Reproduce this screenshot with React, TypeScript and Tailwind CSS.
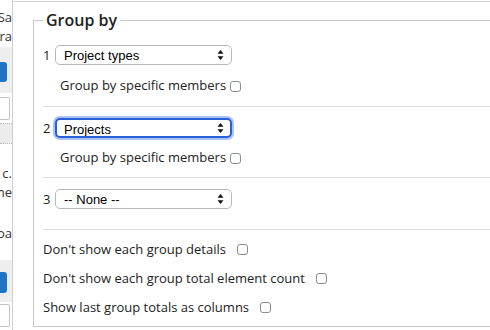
import React from "react";

function UpDown() {
  return (
    <svg width="7" height="11" viewBox="0 0 7 11" className="pointer-events-none absolute right-[8px] top-1/2 -translate-y-1/2">
      <path d="M3.5 0.5 L6.5 4.3 H0.5 Z" fill="#111" />
      <path d="M3.5 10.5 L6.5 6.7 H0.5 Z" fill="#111" />
    </svg>
  );
}

function Select({ value, focused }: { value: string; focused?: boolean }) {
  return (
    <div className="relative w-[177px] h-[20px]">
      <select
        defaultValue={value}
        className={
          focused
            ? "block appearance-none w-full h-full rounded-[5px] border-2 border-[#2a5fd8] shadow-[0_0_0_2px_#a9c3f5] bg-white pl-[7px] text-[13px] text-black outline-none font-['Liberation_Sans',Arial,sans-serif]"
            : "block appearance-none w-full h-full rounded-[5px] border border-[#b8b8b8] bg-white pl-[8px] text-[13px] text-black outline-none font-['Liberation_Sans',Arial,sans-serif]"
        }
      >
        <option>{value}</option>
      </select>
      <UpDown />
    </div>
  );
}

function Box() {
  return (
    <input
      type="checkbox"
      className="appearance-none w-[11px] h-[11px] rounded-[3px] border border-[#8c8c8c] bg-white shrink-0"
    />
  );
}

function GroupRow({ n, value, focused, members }: { n: number; value: string; focused?: boolean; members?: boolean }) {
  return (
    <>
      <div className="flex items-center h-[20px]">
        <span className="w-[12px] text-[13px] leading-[20px]">{n}</span>
        <Select value={value} focused={focused} />
      </div>
      {members && (
        <label className="flex items-center gap-[4px] h-[20px] ml-[17px] mt-[10px] text-[13px]">
          Group by specific members
          <Box />
        </label>
      )}
    </>
  );
}

const options = [
  "Don't show each group details",
  "Don't show each group total element count",
  "Show last group totals as columns",
];

export default function App() {
  return (
    <div className="flex w-[490px] h-[330px] overflow-hidden bg-white text-[#222] font-['Open_Sans',sans-serif]">
      <aside className="w-[13px] shrink-0 border-r border-[#cfcfcf] overflow-hidden flex flex-col text-[13px] leading-[19px] text-[#333]">
        <div className="h-[8px]" />
        <div className="flex justify-end whitespace-nowrap">Sa</div>
        <div className="flex justify-end whitespace-nowrap">ra</div>
        <div className="h-[46px] bg-[#eeeeee] mt-[1px] pt-[15px]">
          <div className="w-[7px] h-[20px] bg-[#1f74c6] rounded-r-[3px]" />
        </div>
        <div className="h-[23px] w-[10px] mt-[4px] border border-[#c4c4c4] border-l-0 rounded-r-[2px]" />
        <div className="h-[21px] mt-[3px] bg-[#ececec] border-y border-dotted border-[#bbb]" />
        <div className="h-[20px]" />
        <div className="flex justify-end whitespace-nowrap">c.</div>
        <div className="flex justify-end whitespace-nowrap">me</div>
        <div className="h-[22px]" />
        <div className="flex justify-end whitespace-nowrap">oa</div>
        <div className="h-[17px]" />
        <div className="h-[42px] bg-[#eeeeee] pt-[12px]">
          <div className="w-[7px] h-[21px] bg-[#1f74c6] rounded-r-[3px]" />
        </div>
        <div className="h-[23px] w-[10px] mt-[2px] border border-[#c4c4c4] border-l-0 rounded-r-[2px]" />
      </aside>

      <main className="flex-1 min-w-0 mt-[1px] border-t border-[#d2d2d2] pl-[20px]">
        <fieldset className="mt-[7px] w-[520px] border border-[#c9c9c9] px-[9px]">
          <legend className="px-[3px] text-[16px] leading-[22px] font-semibold text-[#222]">Group by</legend>

          <div className="pt-[14px] pb-[10px] [&>label]:mt-[11px]">
            <GroupRow n={1} value="Project types" members />
          </div>
          <div className="pt-[11px] pb-[9px] border-t border-[#dedede]">
            <GroupRow n={2} value="Projects" focused members />
          </div>
          <div className="pt-[11px] pb-[20px] border-t border-[#dedede]">
            <GroupRow n={3} value="-- None --" />
          </div>
          <div className="pt-[5px] pb-[4px] border-t border-[#dedede]">
            {options.map((o) => (
              <label key={o} className="flex items-center gap-[11px] h-[29px] text-[13px]">
                {o}
                <Box />
              </label>
            ))}
          </div>
        </fieldset>
      </main>
    </div>
  );
}
